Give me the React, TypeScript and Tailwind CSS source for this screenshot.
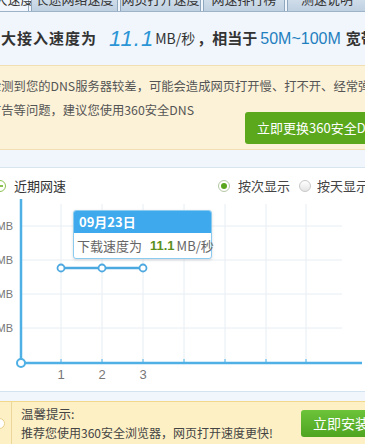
const cjk = '"Noto Sans CJK SC", "Liberation Sans", sans-serif';

const tabs = [
  { label: '最大速度', w: 'w-[42px]', active: true },
  { label: '长途网络速度', w: 'w-[87px]' },
  { label: '网页打开速度', w: 'w-[81px]' },
  { label: '网速排行榜', w: 'w-[82px]' },
  { label: '测速说明', w: 'w-[80px]' },
];

const gridY = [227, 261, 295, 329];
const gridX = [61, 102, 143, 184, 225, 266, 306];
const points = [61, 102, 143];

function Chart() {
  return (
    <svg width="365" height="192" viewBox="0 198 365 192" className="block">
      {gridY.map((y) => (
        <g key={y}>
          <line x1="21" y1={y} x2="342" y2={y} stroke="#e8eef4" strokeWidth="1" />
          <text x="13" y={y + 4} textAnchor="end" fontSize="11" fill="#777" fontFamily="Liberation Sans, sans-serif">
            10MB
          </text>
        </g>
      ))}
      {gridX.map((x) => (
        <g key={x}>
          <line x1={x} y1="205" x2={x} y2="364" stroke="#e8eef4" strokeWidth="1" />
          <line x1={x} y1="360" x2={x} y2="364" stroke="#4fb0e6" strokeWidth="1" />
        </g>
      ))}
      <line x1="21" y1="200" x2="21" y2="364" stroke="#4fb0e6" strokeWidth="2.5" />
      <line x1="21" y1="364" x2="362" y2="364" stroke="#4fb0e6" strokeWidth="2.5" />
      <circle cx="21" cy="364" r="4" fill="#fff" stroke="#4fb0e6" strokeWidth="2" />
      <polyline points={points.map((x) => `${x},269`).join(' ')} fill="none" stroke="#4ca8e0" strokeWidth="2.5" />
      {points.map((x) => (
        <circle key={x} cx={x} cy="269" r="3.5" fill="#fff" stroke="#4ca8e0" strokeWidth="1.8" />
      ))}
      {points.map((x, i) => (
        <text key={x} x={x} y="380" textAnchor="middle" fontSize="13" fill="#777" fontFamily="Liberation Sans, sans-serif">
          {i + 1}
        </text>
      ))}
    </svg>
  );
}

export default function App() {
  return (
    <div className="w-[365px] h-[444px] overflow-hidden bg-[#f0f6fc] text-[#333]" style={{ fontFamily: cjk }}>
      {/* tabs, cut at the top */}
      <div className="h-[12px] overflow-hidden border-b border-[#9db3c8]">
        <div className="flex gap-[2px] -mt-[14px] -ml-[13px]">
          {tabs.map((t) => (
            <div
              key={t.label}
              className={`${t.w} h-[26px] shrink-0 flex items-center justify-center text-[13px] whitespace-nowrap border border-[#8fa7bf] ${
                t.active ? 'bg-[#f0f6fc] text-[#333] border-l-0' : 'bg-gradient-to-b from-[#e2ebf4] to-[#bfd0e1] text-[#333]'
              }`}
            >
              {t.label}
            </div>
          ))}
        </div>
      </div>

      {/* speed line */}
      <div className="h-[53px] flex items-center -ml-[15px] whitespace-nowrap">
        <span className="text-[15px] font-bold tracking-[1px]">最大接入速度为</span>
        <span
          className="ml-[12px] text-[22px] italic text-[#2b95d6] tracking-[1px] leading-none"
          style={{ fontFamily: '"Liberation Sans", sans-serif' }}
        >
          11.1
        </span>
        <span className="text-[14px] ml-[1px]">MB/秒</span>
        <span className="text-[15px] font-bold ml-[2px]">，相当于</span>
        <span className="text-[16px] text-[#1f7fbf] ml-[3px]" style={{ fontFamily: '"Liberation Sans", sans-serif' }}>
          50M~100M
        </span>
        <span className="text-[15px] font-bold ml-[5px]">宽带</span>
      </div>

      {/* dns notice */}
      <div className="h-[85px] bg-[#fcf2d8] border-t border-b border-[#f1deb2]">
        <div className="-ml-[11px] pt-[8px] text-[12.3px] text-[#555] leading-[24px] whitespace-nowrap">
          <div>检测到您的DNS服务器较差，可能会造成网页打开慢、打不开、经常弹</div>
          <div>广告等问题，建议您使用360安全DNS</div>
        </div>
        <div className="flex justify-end -mt-[10px] -mr-[10px]">
          <button className="h-[32px] w-[130px] rounded-[3px] bg-[#5ba81d] text-white text-[13px] text-left pl-[12px] whitespace-nowrap">
            立即更换360安全DNS
          </button>
        </div>
      </div>

      <div className="h-[17px]" />

      {/* chart panel */}
      <div className="bg-white border-t border-[#d8e4ee] h-[224px] relative">
        <div className="flex items-center h-[35px] pt-[1px]">
          <div className="-ml-[6px] w-[12px] h-[12px] rounded-full border-[1.5px] border-[#8cc152] flex items-center justify-center">
            <div className="w-[5px] h-[1.5px] bg-[#8cc152]" />
          </div>
          <span className="ml-[8px] text-[13px] text-[#333]">近期网速</span>
          <div className="ml-auto flex items-center text-[13px] text-[#444] whitespace-nowrap -mr-[4px]">
            <span className="w-[12px] h-[12px] rounded-full border border-[#b5c8a5] bg-white flex items-center justify-center">
              <span className="w-[6px] h-[6px] rounded-full bg-[#5aa51e]" />
            </span>
            <span className="ml-[8px]">按次显示</span>
            <span className="ml-[9px] w-[12px] h-[12px] rounded-full border border-[#c8c8c8] bg-gradient-to-b from-white to-[#e4e4e4]" />
            <span className="ml-[6px]">按天显示</span>
          </div>
        </div>
        <div className="-mt-[6px]">
          <Chart />
        </div>

        {/* tooltip */}
        <div className="absolute left-[73px] top-[42px] w-[139px] rounded-[3px] border border-[#8ccbf0] bg-white shadow-[0_1px_3px_rgba(0,0,0,0.15)]">
          <div className="h-[22px] bg-[#3ea9ec] text-white text-[13px] font-bold flex items-center pl-[5px] rounded-t-[2px]">
            09月23日
          </div>
          <div className="h-[25px] flex items-center pl-[3px] text-[13px] text-[#666] whitespace-nowrap">
            下载速度为
            <span className="ml-[8px] font-bold text-[#5b8f1e]" style={{ fontFamily: '"Liberation Sans", sans-serif' }}>
              11.1
            </span>
            <span className="ml-[2px]">MB/秒</span>
          </div>
        </div>
      </div>

      <div className="h-[10px] border-t border-[#d4e3f0]" />

      {/* bottom tip */}
      <div className="h-[43px] bg-[#fdf0c5] border-t border-[#f2d88c] flex items-center">
        <div className="w-[12px] h-full shrink-0 flex items-center border-r border-[#ecd79a]">
          <div className="-ml-[6px] w-[11px] h-[11px] rounded-full bg-white border border-[#e9d08a]" />
        </div>
        <div className="ml-[9px] text-[12px] text-[#444] leading-[19px] whitespace-nowrap">
          <div className="text-[12.5px]">温馨提示:</div>
          <div>推荐您使用360安全浏览器，网页打开速度更快!</div>
        </div>
        <div className="ml-auto -mr-[10px]">
          <button className="h-[27px] w-[74px] rounded-[3px] bg-gradient-to-b from-[#6cc43a] to-[#4fa420] text-white text-[14px] text-left pl-[12px] whitespace-nowrap">
            立即安装
          </button>
        </div>
      </div>
    </div>
  );
}
